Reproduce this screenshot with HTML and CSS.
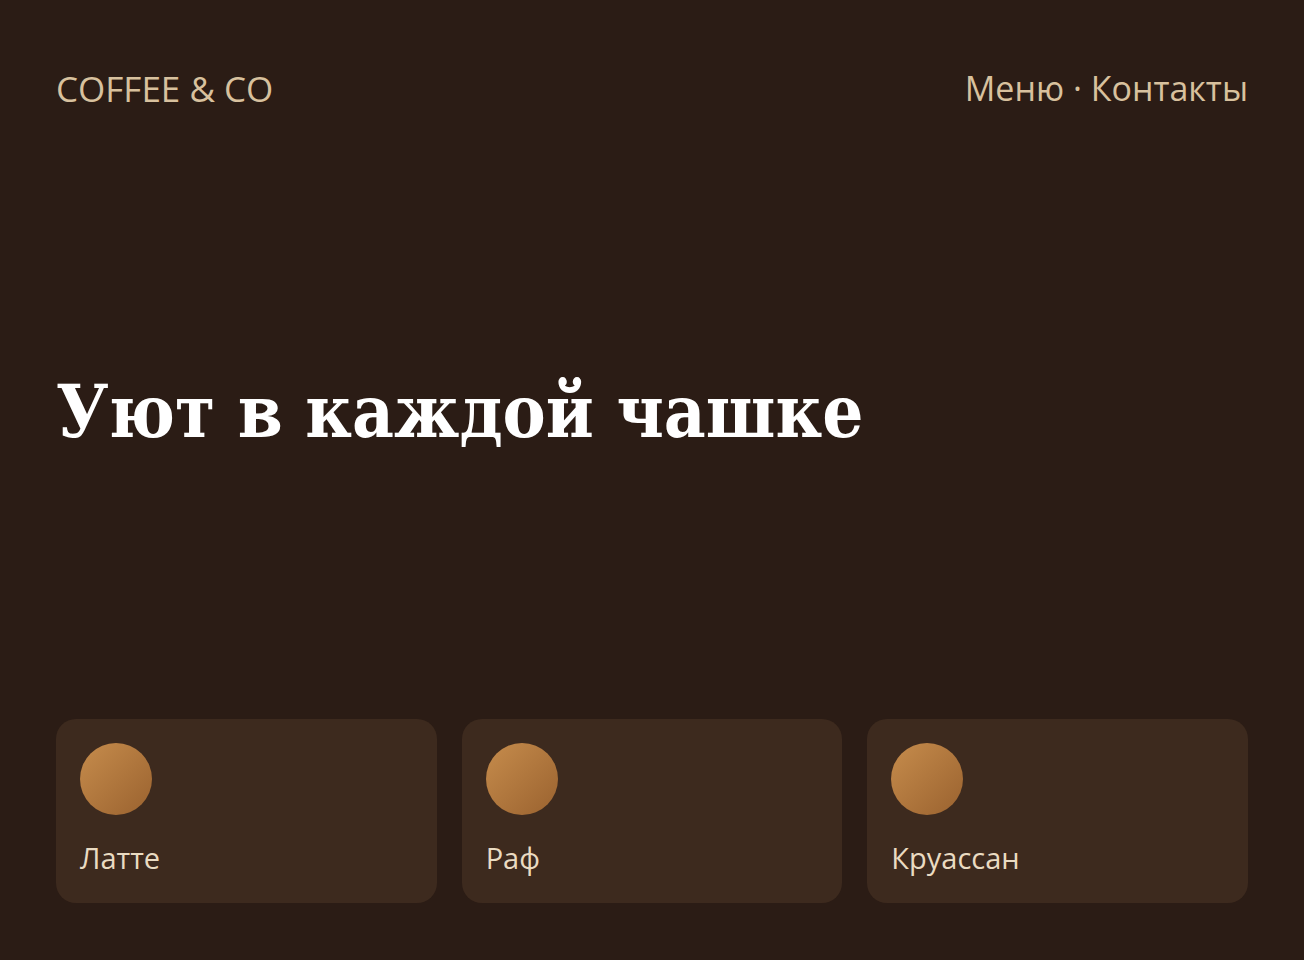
FILE: index.html
```html
<!DOCTYPE html>
<html lang="ru">
<head>
<meta charset="utf-8">
<title>Coffee &amp; Co</title>
<link rel="stylesheet" href="styles.css">
</head>
<body>
<div class="page">
  <header class="header">
    <div class="logo">COFFEE &amp; CO</div>
    <nav class="nav">Меню · Контакты</nav>
  </header>
  <main class="hero">
    <h1 class="title">Уют в каждой чашке</h1>
  </main>
  <section class="cards">
    <div class="card"><div class="dot"></div><div class="name">Латте</div></div>
    <div class="card"><div class="dot"></div><div class="name">Раф</div></div>
    <div class="card"><div class="dot"></div><div class="name">Круассан</div></div>
  </section>
</div>
</body>
</html>
```
FILE: styles.css
```css
html, body {
  margin: 0;
  padding: 0;
  background: #2b1c15;
}
.page {
  box-sizing: border-box;
  height: 960px;
  padding: 56px 56px 57px;
  display: flex;
  flex-direction: column;
  font-family: "Open Sans", "Noto Sans", sans-serif;
}
.header {
  display: flex;
  justify-content: space-between;
  align-items: center;
  height: 64px;
  color: #d8c19e;
  font-size: 34px;
}
.logo {
  font-size: 35px;
}
.hero {
  flex: 1;
  display: flex;
  align-items: center;
  padding-bottom: 16px;
}
.title {
  margin: 0;
  color: #ffffff;
  font-family: "DejaVu Serif Condensed", "DejaVu Serif", serif;
  font-weight: bold;
  font-size: 72px;
  line-height: 1;
}
.cards {
  display: grid;
  grid-template-columns: repeat(3, 1fr);
  gap: 25px;
}
.card {
  background: #3d2a1e;
  border-radius: 20px;
  height: 184px;
  box-sizing: border-box;
  padding: 24px;
}
.dot {
  width: 72px;
  height: 72px;
  border-radius: 50%;
  background: linear-gradient(135deg, #c68c4c, #9a622f);
}
.name {
  margin-top: 26px;
  color: #eadbc2;
  font-size: 29px;
  line-height: 1.2;
}
```
